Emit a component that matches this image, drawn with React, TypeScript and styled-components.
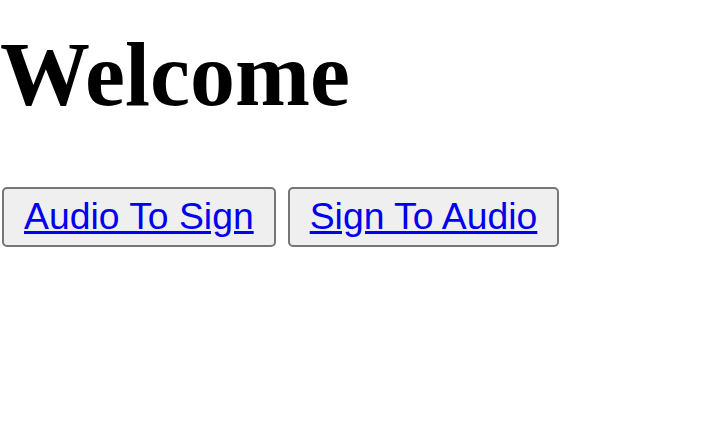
import React from "react";
import styled, { createGlobalStyle } from "styled-components";

const Global = createGlobalStyle`
  html, body { margin: 0; padding: 0; background: #ffffff; }
`;

const Page = styled.div`
  display: flex;
  flex-direction: column;
  align-items: flex-start;
  padding-top: 25px;
`;

const Title = styled.h1`
  margin: 0;
  font-family: "Liberation Serif", "Times New Roman", serif;
  font-weight: 700;
  font-size: 90px;
  line-height: 100px;
  color: #000;
`;

const ButtonRow = styled.div`
  display: flex;
  gap: 12px;
  margin-top: 62px;
  padding-left: 2px;
`;

const NavButton = styled.button`
  font-family: "Liberation Sans", Arial, sans-serif;
  font-size: 37.33px;
  line-height: 43px;
  padding: 6px 20px 7px;
  background: #efefef;
  border: 2px solid #767676;
  border-radius: 5px;
  cursor: pointer;
`;

const NavLink = styled.a`
  color: #0000ee;
  text-decoration: underline;
`;

export default function App() {
  return (
    <>
      <Global />
      <Page>
        <Title>Welcome</Title>
        <ButtonRow>
          <NavButton>
            <NavLink href="#">Audio To Sign</NavLink>
          </NavButton>
          <NavButton>
            <NavLink href="#">Sign To Audio</NavLink>
          </NavButton>
        </ButtonRow>
      </Page>
    </>
  );
}
